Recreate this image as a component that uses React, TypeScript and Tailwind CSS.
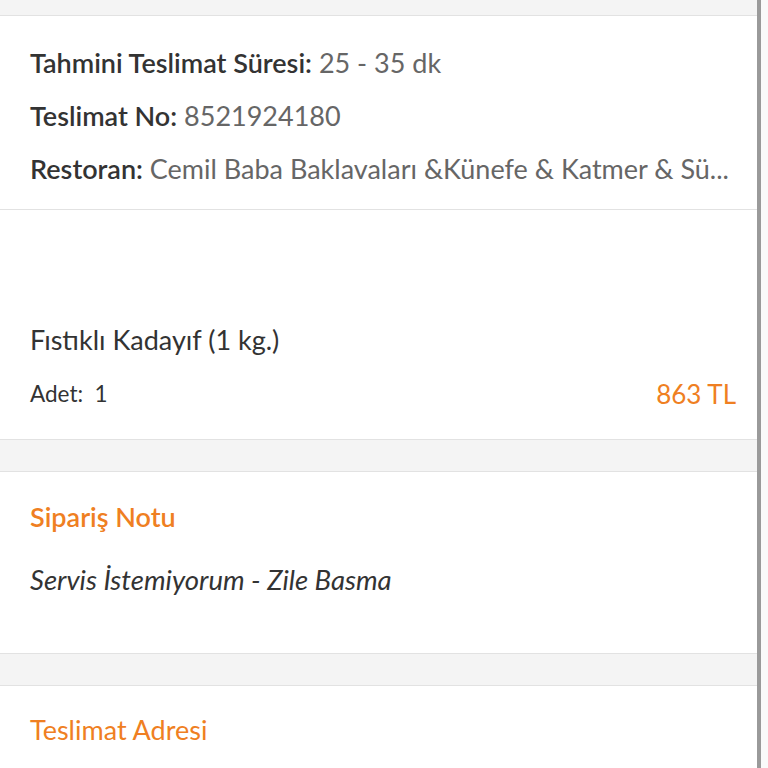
export default function App() {
  return (
    <div className="flex h-[768px] w-[768px] overflow-hidden bg-white font-['Lato','Noto_Sans',sans-serif] text-[#333]">
      <div className="flex w-[757px] flex-col">
        <div className="h-[16px] border-b border-[#e2e2e2] bg-[#f4f4f4]" />

        <div className="flex flex-col border-b border-[#e2e2e2] px-[30px] pb-[14px] pt-[20px] text-[27px] leading-[53px]">
          <p>
            <span className="font-semibold">Tahmini Teslimat Süresi:</span>{" "}
            <span className="text-[#666]">25 - 35 dk</span>
          </p>
          <p>
            <span className="font-semibold">Teslimat No:</span>{" "}
            <span className="text-[#666]">8521924180</span>
          </p>
          <p className="whitespace-nowrap">
            <span className="font-semibold">Restoran:</span>{" "}
            <span className="text-[#666]">Cemil Baba Baklavaları &amp;Künefe &amp; Katmer &amp; Sü...</span>
          </p>
        </div>

        <div className="flex h-[230px] flex-col justify-end border-b border-[#e2e2e2] pb-[30px] pl-[30px] pr-[21px]">
          <p className="text-[27px] leading-[30px]">Fıstıklı Kadayıf (1 kg.)</p>
          <div className="mt-[24px] flex items-center justify-between">
            <span className="text-[22.5px] leading-[30px]">Adet:&nbsp; 1</span>
            <span className="text-[26px] leading-[30px] text-[#ef7f22]">863 TL</span>
          </div>
        </div>

        <div className="h-[32px] border-b border-[#e2e2e2] bg-[#f4f4f4]" />

        <div className="flex h-[182px] flex-col border-b border-[#e2e2e2] px-[30px] pt-[30px]">
          <p className="text-[27px] font-semibold leading-[30px] text-[#ef7f22]">Sipariş Notu</p>
          <p className="mt-[33px] text-[27.5px] italic leading-[30px]">Servis İstemiyorum - Zile Basma</p>
        </div>

        <div className="h-[32px] border-b border-[#e2e2e2] bg-[#f4f4f4]" />

        <div className="flex flex-col px-[30px] pt-[29px]">
          <p className="text-[27px] leading-[30px] text-[#ef7f22]">Teslimat Adresi</p>
        </div>
      </div>
      <div className="w-[4px] bg-[#9a9a9a]" />
      <div className="flex-1 bg-[#fafafa]" />
    </div>
  );
}
